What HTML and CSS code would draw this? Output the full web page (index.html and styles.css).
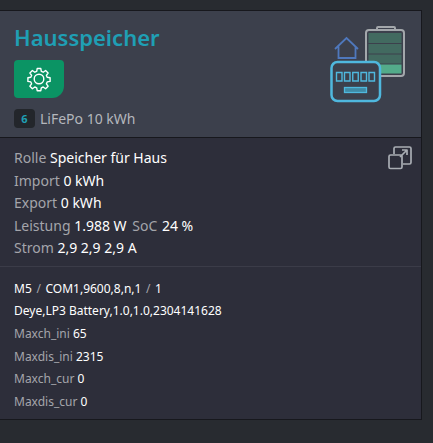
FILE: index.html
```html
<!doctype html>
<html lang="de">
  <head>
    <meta charset="UTF-8" />
    <title>Hausspeicher</title>
    <link rel="stylesheet" href="styles.css">
  </head>
  <body>
    <div class="card">
      <!-- Header -->
      <div class="card-header">
        <div class="header-text">
          <div class="card-title">Hausspeicher</div>
          <button class="gear-button">
            <svg width="26" height="26" viewBox="0 0 26 26" fill="none" stroke="#fff" stroke-width="1.4" stroke-linejoin="round">
              <path d="M11.2 2.5h3.6l.5 2.9 1.9.8 2.4-1.7 2.5 2.5-1.7 2.4.8 1.9 2.9.5v3.6l-2.9.5-.8 1.9 1.7 2.4-2.5 2.5-2.4-1.7-1.9.8-.5 2.9h-3.6l-.5-2.9-1.9-.8-2.4 1.7-2.5-2.5 1.7-2.4-.8-1.9-2.9-.5v-3.6l2.9-.5.8-1.9-1.7-2.4 2.5-2.5 2.4 1.7 1.900-.8z" />
              <circle cx="13" cy="13" r="4.8" />
            </svg>
          </button>
          <div class="type-row">
            <span class="type-badge">6</span>
            <span>LiFePo 10 kWh</span>
          </div>
        </div>
        <svg class="device-icon" width="76" height="84" viewBox="0 0 76 84" fill="none">
          <rect x="36" y="10" width="38" height="46" rx="3" stroke="#a3a7ab" stroke-width="2" />
          <path d="M47 10V8a1 1 0 0 1 1-1h16a1 1 0 0 1 1 1v2" stroke="#a3a7ab" stroke-width="2" />
          <rect x="38.500" y="13" width="33" height="10" fill="#426a60" />
          <rect x="38.500" y="24" width="33" height="9.500" fill="#426a60" />
          <rect x="38.500" y="34.500" width="33" height="9" fill="#426a60" />
          <rect x="38.500" y="44.500" width="33" height="9" fill="#53ab8a" />
          <path d="M5 29 16.500 18 28 29M8.500 26.500V38h17V26.500" stroke="#4f78bd" stroke-width="1.800" />
          <rect x="1.500" y="42" width="48.500" height="39" rx="6" fill="#3c404c" stroke="#4fb8de" stroke-width="2.500" />
          <path d="M6.500 52.500H12v8.500H6.500zM14.500 52.500H20v8.500h-5.500zM22.750 52.500h5.500v8.500h-5.500zM31 52.500h5.500v8.500H31zM39 52.500h5.500v8.500H39z" stroke="#4fb8de" stroke-width="1.400" />
          <rect x="14.500" y="67.500" width="22" height="5" fill="#3f8aa5" stroke="#4fb8de" stroke-width="1.300" />
        </svg>
      </div>

      <!-- Values -->
      <div class="card-values">
        <svg class="expand-icon" width="24" height="24" viewBox="0 0 24 24" fill="none" stroke="#a9adb3" stroke-width="1.700" stroke-linejoin="round">
          <path d="M6 8V2.500a1.500 1.500 0 0 1 1.500-1.500h14a1.500 1.500 0 0 1 1.500 1.500v14a1.500 1.500 0 0 1-1.500 1.500H15" />
          <path d="M12 11 19 4M14 4h5v5" />
          <rect x="1" y="9" width="13" height="13.500" rx="1.500" />
        </svg>
        <div><span class="lbl">Rolle</span> Speicher für Haus</div>
        <div><span class="lbl">Import</span> 0 kWh</div>
        <div><span class="lbl">Export</span> 0 kWh</div>
        <div><span class="lbl">Leistung</span> 1.988 W <span class="lbl soc">SoC</span> 24 %</div>
        <div><span class="lbl">Strom</span> 2,9 2,9 2,9 A</div>
      </div>

      <!-- Details -->
      <div class="card-details">
        <div>M5 <span class="lbl sep">/</span> COM1,9600,8,n,1 <span class="lbl sep">/</span> 1</div>
        <div>Deye,LP3 Battery,1.0,1.0,2304141628</div>
        <div><span class="lbl">Maxch_ini</span> 65</div>
        <div><span class="lbl">Maxdis_ini</span> 2315</div>
        <div><span class="lbl">Maxch_cur</span> 0</div>
        <div><span class="lbl">Maxdis_cur</span> 0</div>
      </div>
    </div>
  </body>
</html>
```

FILE: styles.css
```css
:root {
  --page: #282b30;
  --head: #3c404c;
  --panel: #2d2e3a;
  --teal: #1f9fb4;
  --line: #17181d;
}

body {
  font-family: "Noto Sans", "Open Sans", Arial, sans-serif;
  background: var(--page);
  color: #fff;
  margin: 0;
  padding: 10px 0 0;
  overflow: hidden;
}

.card {
  width: 422px;
  height: 410px;
  box-sizing: border-box;
  background: var(--panel);
  border-top: 1px solid var(--line);
  border-right: 1px solid var(--line);
  border-bottom: 1px solid var(--line);
}

.card-header {
  display: flex;
  justify-content: space-between;
  height: 126px;
  padding: 0 0 0 14px;
  background: var(--head);
  border-bottom: 1px solid var(--line);
}

.header-text {
  display: flex;
  flex-direction: column;
  align-items: flex-start;
}

.card-title {
  color: var(--teal);
  font-size: 22px;
  font-weight: 600;
  line-height: 30px;
  margin-top: 11px;
}

.gear-button {
  display: flex;
  align-items: center;
  justify-content: center;
  width: 50px;
  height: 38px;
  margin-top: 8px;
  padding: 0;
  background: #0b9464;
  border: none;
  border-radius: 4px 4px 12px 4px;
}

.type-row {
  display: flex;
  align-items: center;
  gap: 5px;
  margin-top: 11px;
  color: #b4b7bc;
  font-size: 14px;
}

.type-badge {
  width: 21px;
  height: 19px;
  line-height: 19px;
  text-align: center;
  background: #23262b;
  border-radius: 4px;
  color: var(--teal);
  font-size: 11px;
  font-weight: bold;
}

.device-icon {
  margin: 9px 15px 0 0;
}

.card-values {
  position: relative;
  padding: 9px 14px 6px;
  border-bottom: 1px solid #3b3c48;
  font-size: 14px;
  line-height: 22.500px;
}

.expand-icon {
  position: absolute;
  top: 8px;
  right: 9px;
}

.card-details {
  padding: 11px 14px 5px;
  font-size: 12px;
  line-height: 22.700px;
}

.lbl {
  color: #a4a5ab;
}

.soc {
  margin-left: 2px;
  margin-right: 1px;
}

.sep {
  margin: 0 1.500px;
}
```
